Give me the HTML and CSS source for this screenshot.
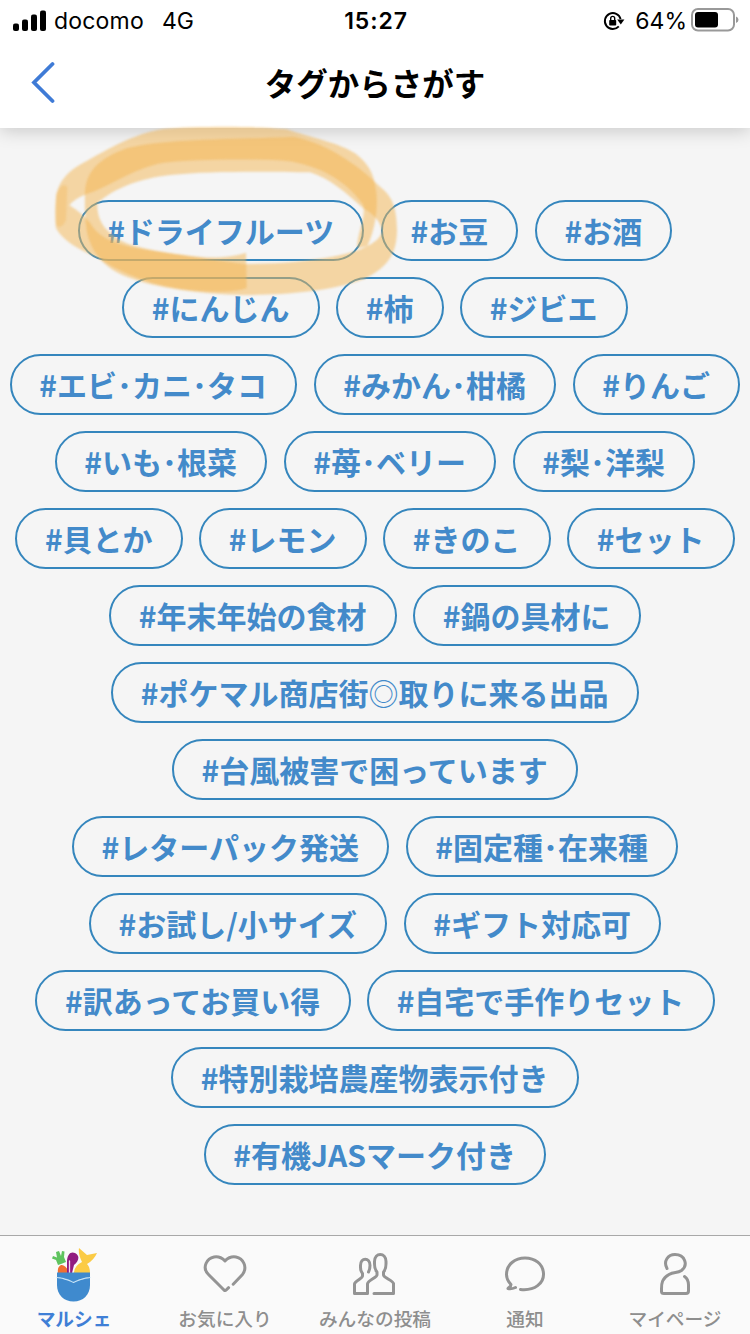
FILE: index.html
```html
<!DOCTYPE html>
<html lang="ja">
<head>
    <meta charset="UTF-8">
    <meta name="viewport" content="width=device-width, initial-scale=1.0">
    <title>タグからさがす</title>
    <link rel="stylesheet" href="styles.css">
</head>
<body>
    <header class="header">
        <div class="status-bar">
            <div class="status-left">
                <svg class="signal" width="34" height="22" viewBox="0 0 34 22">
                    <rect x="0" y="13.5" width="6" height="7.5" rx="2"/>
                    <rect x="9" y="9.5" width="6" height="11.5" rx="2"/>
                    <rect x="18" y="4.5" width="6" height="16.5" rx="2"/>
                    <rect x="27" y="0.5" width="6" height="20.5" rx="2"/>
                </svg>
                <span class="carrier">docomo</span>
                <span class="network">4G</span>
            </div>
            <div class="status-time">15:27</div>
            <div class="status-right">
                <svg width="22" height="20" viewBox="0 0 22 20">
                    <path d="M15.8 15.4A8 8 0 1 1 17.6 8" fill="none" stroke="#000" stroke-width="1.9"/>
                    <path d="M14.2 8.6h7.2l-3.6 4.8z"/>
                    <rect x="6.2" y="9" width="7" height="5.6" rx="0.8"/>
                    <path d="M7.7 9.5V7.4a2 2 0 0 1 4 0v2.1" fill="none" stroke="#000" stroke-width="1.4"/>
                </svg>
                <span class="percent">64%</span>
                <svg class="battery" width="48" height="24" viewBox="0 0 48 24">
                    <rect x="1" y="1" width="42" height="21.5" rx="6" fill="none" stroke="#999" stroke-width="2"/>
                    <rect x="4" y="4" width="23" height="15.5" rx="3"/>
                    <path d="M45 8.5q2.5 1 2.5 3.3t-2.5 3.3z" fill="#999"/>
                </svg>
            </div>
        </div>
        <div class="title-bar">
            <svg class="back" width="26" height="44" viewBox="0 0 26 44">
                <path d="M23.5 4L5 22.5L23.5 41" fill="none" stroke="#3f7bd6" stroke-width="3.8" stroke-linecap="round"/>
            </svg>
            <h1>タグからさがす</h1>
        </div>
    </header>

    <main class="tags">
        <div class="row"><a class="tag">#ドライフルーツ</a><a class="tag">#お豆</a><a class="tag">#お酒</a></div>
        <div class="row"><a class="tag">#にんじん</a><a class="tag">#柿</a><a class="tag">#ジビエ</a></div>
        <div class="row"><a class="tag">#エビ･カニ･タコ</a><a class="tag">#みかん･柑橘</a><a class="tag">#りんご</a></div>
        <div class="row"><a class="tag">#いも･根菜</a><a class="tag">#苺･ベリー</a><a class="tag">#梨･洋梨</a></div>
        <div class="row"><a class="tag">#貝とか</a><a class="tag">#レモン</a><a class="tag">#きのこ</a><a class="tag">#セット</a></div>
        <div class="row"><a class="tag">#年末年始の食材</a><a class="tag">#鍋の具材に</a></div>
        <div class="row"><a class="tag">#ポケマル商店街<span class="thin">◎</span>取りに来る出品</a></div>
        <div class="row"><a class="tag">#台風被害で困っています</a></div>
        <div class="row"><a class="tag">#レターパック発送</a><a class="tag">#固定種･在来種</a></div>
        <div class="row"><a class="tag">#お試し/小サイズ</a><a class="tag">#ギフト対応可</a></div>
        <div class="row"><a class="tag">#訳あってお買い得</a><a class="tag">#自宅で手作りセット</a></div>
        <div class="row"><a class="tag">#特別栽培農産物表示付き</a></div>
        <div class="row"><a class="tag">#有機JASマーク付き</a></div>
    </main>

    <!-- marker circle over the first tag -->
    <svg class="marker" width="390" height="190" viewBox="0 0 1170 570">
        <path d="M982 385C980 340 1008 300 1000 255C965 205 900 145 780 124C700 116 500 116 400 128C300 148 240 200 170 222Q130 238 118 256Q150 275 180 308C200 345 240 365 290 378C350 392 420 400 520 412C570 415 620 408 648 398L650 505C610 518 540 518 460 508C350 494 270 455 200 412C150 390 100 365 78 325C74 290 75 250 80 220C88 185 110 160 140 140C220 95 310 40 400 27C500 18 680 18 770 28C840 52 930 70 975 100C1015 130 1030 160 1036 200C1046 240 1040 320 1012 378Z"/>
        <path fill-rule="evenodd" d="M165 215C170 150 210 115 290 85C400 55 620 58 790 50C900 70 1000 150 1050 200C1090 230 1100 270 1101 330C1100 395 1080 440 1000 478C900 515 760 525 640 525C520 522 380 505 290 470C220 445 180 390 170 330C164 290 164 250 165 215ZM202 250C250 205 330 175 420 165C540 152 730 155 840 157C900 175 950 220 1000 265C1035 285 1055 310 1055 335C1050 370 980 400 880 415C780 430 700 432 640 432C500 412 360 395 290 370C225 340 200 300 202 250Z"/>
        <path class="light" d="M78 225Q95 185 112 200L108 300Q95 330 78 315Z"/>
    </svg>

    <nav class="tab-bar">
        <a class="tab active">
            <svg width="50" height="56" viewBox="0 0 50 56">
                <path d="M10 26q-1-6 3-8q4-1 9 8z" fill="#f07030"/>
                <path d="M10 18L8 13L4 11.5l1-2.5l4 1.5L8 5l3-1l2 5l1-5l2.500.5L16 10l2 5l-5 2z" fill="#5fc35f"/>
                <path d="M19 26V15c0-8 4-11 8-9c6 3 3 9-1 12l-2 8z" fill="#911c80"/>
                <path d="M21.500 26V14" fill="none" stroke="#f4d9ee" stroke-width="1.3"/>
                <path d="M26 26q0-7 8-11q-4-8-3-14l8 7l10-2q-3 7-10 11q3 3 3 9z" fill="#fbcb45"/>
                <path d="M9 25.500h33V38c0 10-7 16.500-16.500 16.500S9 48 9 38z" fill="#3f8ace"/>
                <path d="M9 30.500q9 1 16.500 5q8-4 16.500-5" fill="none" stroke="#c5e2f5" stroke-width="1.2" stroke-dasharray="3 .6"/>
            </svg>
            <span>マルシェ</span>
        </a>
        <a class="tab">
            <svg width="50" height="56" viewBox="0 0 50 56">
                <path d="M33.200 37.200L42.500 27.500C45 24 45.500 20 44 16.500C41 9.500 32 7 25 13.800C18 7 9 9.500 6 16.500C4.500 20 5 24 8.500 27.500L24 43q1.200 1 2.200 0l2.400-2.300"/>
            </svg>
            <span>お気に入り</span>
        </a>
        <a class="tab">
            <svg width="50" height="56" viewBox="0 0 50 56">
                <path d="M24 46.500H43.500V36.500C43 33.500 34 31 33.500 28V25C36.500 22 36 19 36 14.500C36 5 24.500 5 24.500 14.500C24.500 19 24 22 27 25V28C26.500 31 18 33 17.500 37V46.500H4.500V37C5 34 12.500 31.500 12.500 29V26.500C10 23.500 10.500 21 10.500 18.500C10.500 10 20 10 20 18.500Q20 22 18.500 25"/>
            </svg>
            <span>みんなの投稿</span>
        </a>
        <a class="tab">
            <svg width="50" height="56" viewBox="0 0 50 56">
                <path d="M20.500 42.500C35 44 44 36 43.500 26.500C43 17 35 11 25 11S6.500 17.500 6.500 27.500C6.500 32 8.500 35 11 37.500C11 40 8.500 40 8 41.500Q11 42.500 15.500 40.500"/>
            </svg>
            <span>通知</span>
        </a>
        <a class="tab">
            <svg width="50" height="56" viewBox="0 0 50 56">
                <path d="M17 21.500C13 14 18 7.500 25 7.500C35 7.500 38.500 18 31.500 23.500C27 26.500 24 24.500 19 27.500C12 31.500 11.500 36 11.500 42V44.500Q11.500 46.500 14 46.500H36Q38.500 46.500 38.500 44V38C38.500 34 37.500 31.500 34.500 29.500"/>
            </svg>
            <span>マイページ</span>
        </a>
    </nav>
</body>
</html>
```
FILE: styles.css
```css
* {
    box-sizing: border-box;
}
body {
    margin: 0;
    width: 750px;
    height: 1334px;
    display: flex;
    flex-direction: column;
    position: relative;
    overflow: hidden;
    background: #f5f5f5;
    font-family: "Noto Sans CJK JP", sans-serif;
}
.header {
    height: 128px;
    background: #fff;
    box-shadow: 0 2px 18px rgba(0, 0, 0, 0.2);
}
.status-bar {
    height: 40px;
    padding: 1px 11px 0 13px;
    display: grid;
    grid-template-columns: 1fr auto 1fr;
    align-items: center;
    font-family: Inter, sans-serif;
    font-size: 23px;
    line-height: 40px;
}
.status-left, .status-right {
    display: flex;
    align-items: center;
}
.status-right {
    justify-content: flex-end;
}
.carrier {
    margin-left: 7px;
    letter-spacing: 0.2px;
}
.network {
    margin-left: 18px;
}
.status-time {
    font-weight: 600;
    letter-spacing: 0.9px;
}
.percent {
    margin-left: 10px;
}
.battery {
    margin: -2px 0 0 4px;
}
.title-bar {
    height: 84px;
    padding: 0 29px;
    display: grid;
    grid-template-columns: 26px 1fr 26px;
    align-items: center;
}
.title-bar h1 {
    margin: 0;
    text-align: center;
    font-size: 31.5px;
    font-weight: 700;
    line-height: 44px;
}
.tags {
    flex: 1;
    padding-top: 72px;
    display: flex;
    flex-direction: column;
    gap: 16px;
}
.row {
    display: flex;
    justify-content: center;
    gap: 16.5px;
}
.tag {
    height: 61px;
    padding: 0 28.2px 0 27.6px;
    border: 2px solid #3586bd;
    border-radius: 31px;
    color: #438aca;
    font-size: 30px;
    font-weight: 700;
    line-height: 56px;
    white-space: nowrap;
}
.thin {
    font-weight: 400;
}
.marker {
    position: absolute;
    left: 30px;
    top: 120px;
    fill: #f4b552;
    fill-opacity: 0.5;
    filter: blur(1px);
}
.marker .light {
    fill-opacity: 0.35;
}
.tab-bar {
    height: 99px;
    border-top: 1px solid #a8a8a8;
    background: #fafafa;
    display: grid;
    grid-template-columns: repeat(5, 1fr);
}
.tab {
    padding-top: 11px;
    display: flex;
    flex-direction: column;
    align-items: center;
    color: #8e8e8e;
    font-size: 18.7px;
    font-weight: 500;
    line-height: 28px;
}
.tab svg {
    fill: none;
    stroke: #949494;
    stroke-width: 3;
    stroke-linecap: round;
    stroke-linejoin: round;
}
.tab.active {
    color: #3f7fd6;
    font-weight: 700;
}
.tab.active svg {
    margin-right: 5px;
    stroke: none;
}
.tab span {
    margin-top: 1px;
}
.tab.active span {
    margin-right: 2px;
}
```
